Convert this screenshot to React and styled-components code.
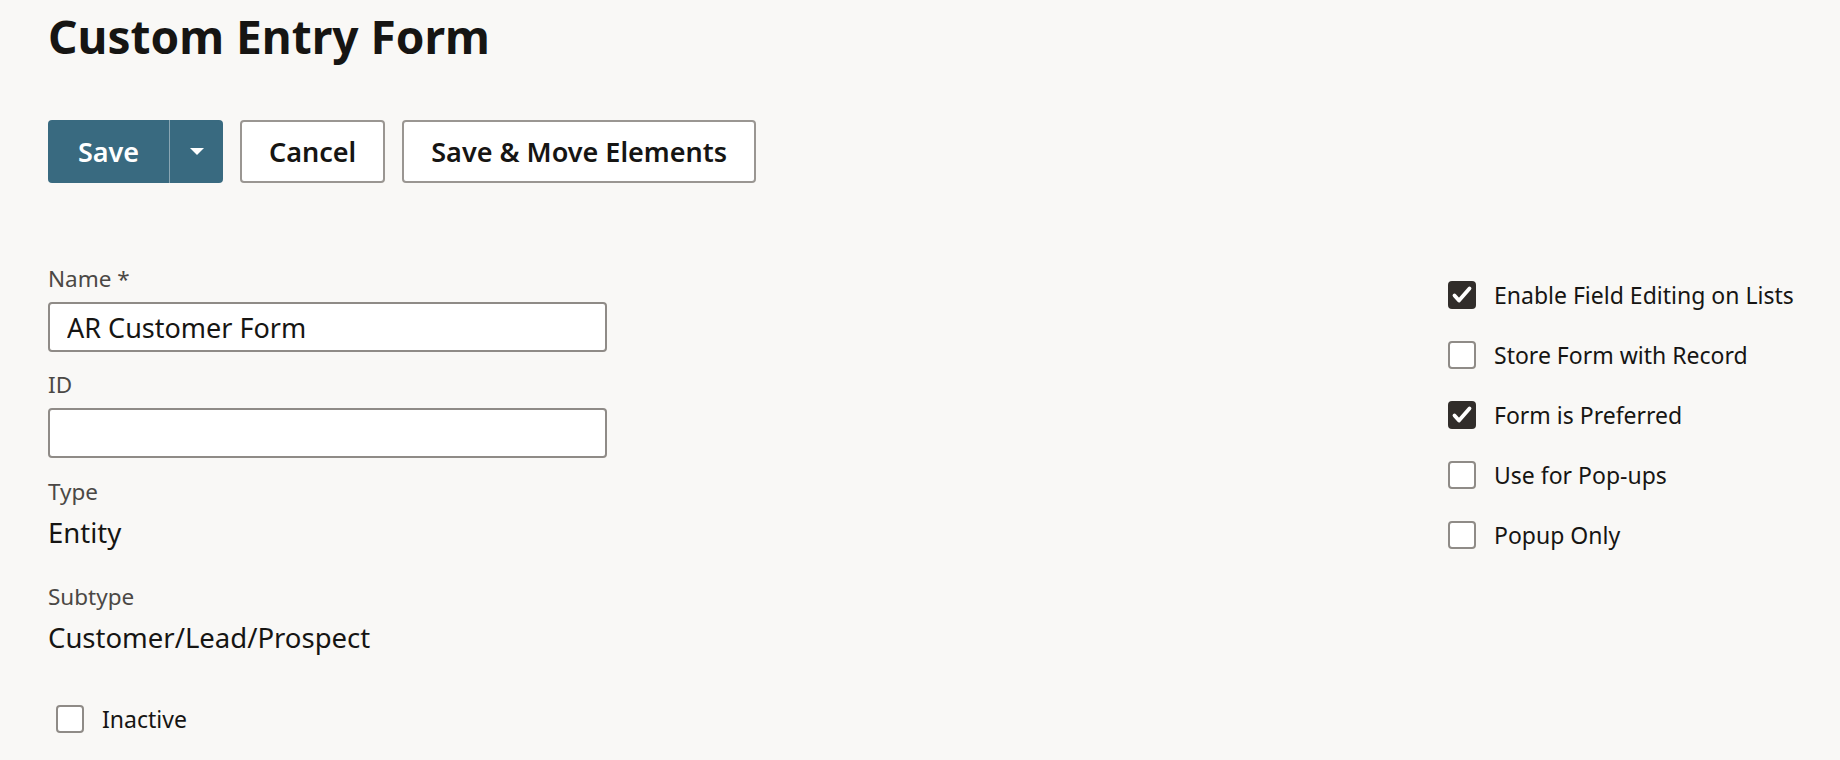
import React from "react";
import styled, { createGlobalStyle } from "styled-components";

const Global = createGlobalStyle`
  html, body { margin: 0; padding: 0; background: #f9f8f6; }
  body { font-family: "Noto Sans", "Lato", sans-serif; color: #161513; }
  * { box-sizing: border-box; }
`;

const Page = styled.div`
  padding: 8px 43px 0 48px;
  min-height: 760px;
`;

const Title = styled.h1`
  margin: 0;
  font-size: 46px;
  line-height: 56px;
  font-weight: 700;
  color: #161513;
`;

const Toolbar = styled.div`
  display: flex;
  gap: 17px;
  margin-top: 56px;
  height: 63px;
`;

const SplitButton = styled.div`
  display: flex;
  background: #396a80;
  border-radius: 4px;
  overflow: hidden;
`;

const PrimaryButton = styled.button`
  border: none;
  background: transparent;
  color: #fff;
  font-family: inherit;
  font-size: 27px;
  font-weight: 600;
  width: ${(p) => p.$w}px;
  padding: 0;
  display: flex;
  align-items: center;
  justify-content: center;
  cursor: pointer;
`;

const Divider = styled.span`
  width: 1px;
  background: #8aa6b3;
  align-self: stretch;
`;

const Caret = styled.span`
  width: 0;
  height: 0;
  border-left: 7px solid transparent;
  border-right: 7px solid transparent;
  border-top: 7px solid #fff;
`;

const OutlineButton = styled.button`
  border: 2px solid #9a9692;
  border-radius: 4px;
  background: #fff;
  color: #161513;
  font-family: inherit;
  font-size: 27px;
  font-weight: 600;
  padding: 0 ${(p) => p.$px}px;
  cursor: pointer;
`;

const FormArea = styled.div`
  display: flex;
  margin-top: 82px;
`;

const LeftCol = styled.div`
  flex: 1;
  display: flex;
  flex-direction: column;
`;

const RightCol = styled.div`
  width: 349px;
  display: flex;
  flex-direction: column;
  gap: 32px;
  padding-top: 16px;
`;

const Label = styled.div`
  font-size: 22.5px;
  line-height: 28px;
  color: #4b4845;
  margin-top: ${(p) => p.$mt || 0}px;
`;

const Input = styled.input`
  width: 559px;
  height: 50px;
  margin-top: 9px;
  border: 2px solid #8f8b87;
  border-radius: 4px;
  background: #fff;
  font-family: inherit;
  font-size: 27px;
  color: #161513;
  padding: 0 17px;
  outline: none;
`;

const Value = styled.div`
  font-size: 27.5px;
  line-height: 34px;
  color: #161513;
  margin-top: 10px;
`;

const CheckRow = styled.label`
  display: flex;
  align-items: center;
  gap: 18px;
  font-size: 23px;
  line-height: 28px;
  color: #161513;
  margin-left: ${(p) => p.$ml || 0}px;
  margin-top: ${(p) => p.$mt || 0}px;
`;

const Box = styled.span`
  width: 28px;
  height: 28px;
  border-radius: 4px;
  flex: none;
  display: flex;
  border: ${(p) => (p.$checked ? "none" : "2px solid #8f8b87")};
  background: ${(p) => (p.$checked ? "#312d2a" : "#fff")};
`;

function Check({ checked, children, ml, mt }) {
  return (
    <CheckRow $ml={ml} $mt={mt}>
      <Box $checked={checked}>
        {checked && (
          <svg width="28" height="28" viewBox="0 0 28 28">
            <path d="M6.5 14.5 L11 19.5 L21.5 7.5" fill="none" stroke="#fff" strokeWidth="3.8" strokeLinecap="round" strokeLinejoin="round" />
          </svg>
        )}
      </Box>
      {children}
    </CheckRow>
  );
}

export default function App() {
  return (
    <>
      <Global />
      <Page>
        <Title>Custom Entry Form</Title>
        <Toolbar>
          <SplitButton>
            <PrimaryButton $w={121}>Save</PrimaryButton>
            <Divider />
            <PrimaryButton $w={53}>
              <Caret />
            </PrimaryButton>
          </SplitButton>
          <OutlineButton $px={27}>Cancel</OutlineButton>
          <OutlineButton $px={27}>Save &amp; Move Elements</OutlineButton>
        </Toolbar>
        <FormArea>
          <LeftCol>
            <Label>Name *</Label>
            <Input defaultValue="AR Customer Form" />
            <Label $mt={19}>ID</Label>
            <Input defaultValue="" />
            <Label $mt={20}>Type</Label>
            <Value>Entity</Value>
            <Label $mt={33}>Subtype</Label>
            <Value>Customer/Lead/Prospect</Value>
            <Check ml={8} mt={50}>Inactive</Check>
          </LeftCol>
          <RightCol>
            <Check checked>Enable Field Editing on Lists</Check>
            <Check>Store Form with Record</Check>
            <Check checked>Form is Preferred</Check>
            <Check>Use for Pop-ups</Check>
            <Check>Popup Only</Check>
          </RightCol>
        </FormArea>
      </Page>
    </>
  );
}
